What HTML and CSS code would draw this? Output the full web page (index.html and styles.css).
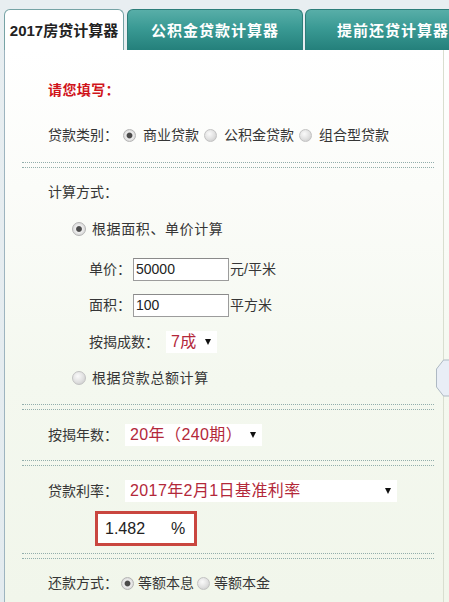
FILE: index.html
```html
<!DOCTYPE html>
<html lang="zh-CN">
<head>
<meta charset="utf-8">
<title>2017房贷计算器</title>
<link rel="stylesheet" href="styles.css">
</head>
<body>
<div class="page">
  <div class="tabs">
    <div class="tab active">2017房贷计算器</div>
    <div class="tab">公积金贷款计算器</div>
    <div class="tab third">提前还贷计算器</div>
  </div>
  <div class="panel">
    <div class="inner">
      <div class="row l1 title mt28">请您填写：</div>

      <div class="row l1 mt21">
        <span>贷款类别：</span>
        <span class="radio on"></span><span>商业贷款</span>
        <span class="radio"></span><span>公积金贷款</span>
        <span class="radio"></span><span>组合型贷款</span>
      </div>

      <div class="divider mt15"></div>

      <div class="row l1 mt12">计算方式：</div>

      <div class="row l2 mt13">
        <span class="radio on big"></span><span class="wide">根据面积、单价计算</span>
      </div>

      <div class="row l3 mt16">
        <span>单价：</span><input class="field" type="text" value="50000"><span class="unit">元/平米</span>
      </div>

      <div class="row l3 mt12">
        <span>面积：</span><input class="field" type="text" value="100"><span class="unit">平方米</span>
      </div>

      <div class="row l3 mt13">
        <span>按揭成数：</span>
        <span class="select ratio"><span>7成</span><span class="caret"></span></span>
      </div>

      <div class="row l2 mt12">
        <span class="radio big"></span><span class="wide">根据贷款总额计算</span>
      </div>

      <div class="divider mt14"></div>

      <div class="row l1 mt13">
        <span>按揭年数：</span>
        <span class="select years"><span>20年（240期）</span><span class="caret"></span></span>
      </div>

      <div class="divider mt13"></div>

      <div class="row l1 mt13">
        <span>贷款利率：</span>
        <span class="select rate"><span>2017年2月1日基准利率</span><span class="caret"></span></span>
      </div>

      <div class="ratebox mt8">
        <span class="rate-value">1.482</span><span class="pct">%</span>
      </div>

      <div class="divider mt7"></div>

      <div class="row l1 mt12 tight">
        <span>还款方式：</span>
        <span class="radio on"></span><span>等额本息</span>
        <span class="radio"></span><span>等额本金</span>
      </div>
    </div>
    <svg class="scroll-hint" width="17" height="38" viewBox="0 0 17 38">
      <polygon points="17,1 7.5,1 0.5,10 0.5,28 7.5,37 17,37" fill="#e9eef6" stroke="#aeb9c3" stroke-width="1"/>
    </svg>
  </div>
</div>
</body>
</html>
```
FILE: styles.css
```css
html, body {
  margin: 0;
  padding: 0;
}

body {
  width: 449px;
  height: 602px;
  overflow: hidden;
  background: #dfe8ee;
  font-family: "Liberation Sans", "Noto Sans CJK SC", sans-serif;
  color: #363636;
}

.page {
  padding-top: 9px;
  padding-left: 4px;
  background: linear-gradient(#e8eef1, #e3ebef);
}

.tabs {
  display: flex;
  height: 41px;
  overflow: hidden;
}

.tab {
  flex-shrink: 0;
  box-sizing: border-box;
  width: 176px;
  height: 41px;
  margin-left: 3px;
  border: 1px solid #2c7d79;
  border-bottom: none;
  border-radius: 6px 6px 0 0;
  background: linear-gradient(#58aea8 0%, #3a9a94 45%, #24807b 100%);
  color: #fff;
  font-size: 15px;
  font-weight: bold;
  letter-spacing: 1px;
  display: flex;
  align-items: center;
  justify-content: center;
  padding-bottom: 1px;
}

.tab.third {
  margin-left: 2px;
}

.tab.active {
  width: 120px;
  margin-left: 0;
  border-color: #76a3a5;
  background: #fff;
  color: #222;
  letter-spacing: 0;
}

.panel {
  position: relative;
  height: 552px;
  border-left: 1px solid #9db4bf;
  background: linear-gradient(#ffffff 0%, #fbfcf9 25%, #f4f8ef 60%, #f1f6eb 100%);
}

.inner {
  height: 552px;
  margin-right: 5px;
  border-right: 1px solid #d9ded0;
  overflow: hidden;
}

.row {
  display: flex;
  align-items: center;
  height: 24px;
  font-size: 14px;
  line-height: 24px;
  white-space: nowrap;
}

.wide {
  letter-spacing: 0.6px;
}

.l1 { padding-left: 43px; }
.l2 { padding-left: 67px; }
.l3 { padding-left: 84px; }

.mt7 { margin-top: 7px; }
.mt8 { margin-top: 8px; }
.mt12 { margin-top: 12px; }
.mt13 { margin-top: 13px; }
.mt14 { margin-top: 14px; }
.mt15 { margin-top: 15px; }
.mt16 { margin-top: 16px; }
.mt21 { margin-top: 21px; }
.mt28 { margin-top: 28px; }

.title {
  color: #d0141b;
  font-weight: bold;
  font-size: 14px;
  letter-spacing: 0.4px;
}

.radio {
  flex-shrink: 0;
  box-sizing: border-box;
  width: 13px;
  height: 13px;
  margin: 0 7px 0 5px;
  border-radius: 50%;
  border: 1px solid #c2c2c2;
  background: radial-gradient(circle at 40% 35%, #fafafa 0%, #e0e0e0 55%, #c4c4c4 100%);
}

.radio.on {
  border-color: #b4b4b4;
  background: radial-gradient(circle at 50% 50%, #4b4b4b 0, #4b4b4b 2.4px, #eeeeee 3.4px, #dcdcdc 70%, #c6c6c6 100%);
}

.radio.big {
  width: 14px;
  height: 14px;
  margin: 0 6px 0 0;
}

.tight .radio {
  margin: 0 4px 0 3px;
}

.field {
  box-sizing: border-box;
  width: 96px;
  height: 23px;
  margin: 0 1px 0 2px;
  padding: 0 2px;
  border: 1px solid #9c9c9c;
  border-top-color: #8a8a8a;
  background: #fff;
  font-family: "Liberation Sans", sans-serif;
  font-size: 14px;
  color: #222;
  outline: none;
}

.select {
  box-sizing: border-box;
  display: inline-flex;
  align-items: center;
  height: 22px;
  padding: 0 6px 0 5px;
  background: #fff;
  color: #b3283a;
  font-size: 16px;
  line-height: 22px;
  letter-spacing: 0.4px;
}

.select.ratio {
  width: 51px;
  margin-left: 7px;
}

.select.years {
  width: 137px;
  margin-left: 7px;
}

.select.rate {
  width: 272px;
  margin-left: 7px;
}

.caret {
  margin-left: auto;
  width: 0;
  height: 0;
  border-left: 3.5px solid transparent;
  border-right: 3.5px solid transparent;
  border-top: 6px solid #111;
}

.divider {
  box-sizing: border-box;
  height: 6px;
  margin-right: 9px;
  margin-left: 17px;
  border-top: 1px dotted #93aeac;
  border-bottom: 1px dotted #93aeac;
}

.ratebox {
  box-sizing: border-box;
  display: flex;
  align-items: center;
  width: 102px;
  height: 35px;
  margin-left: 90px;
  padding-left: 7px;
  border: 3px solid #c9463f;
  background: #fff;
  font-size: 16px;
  color: #222;
}

.pct {
  margin-left: 26px;
}

.scroll-hint {
  position: absolute;
  left: 431px;
  top: 309px;
}
```
